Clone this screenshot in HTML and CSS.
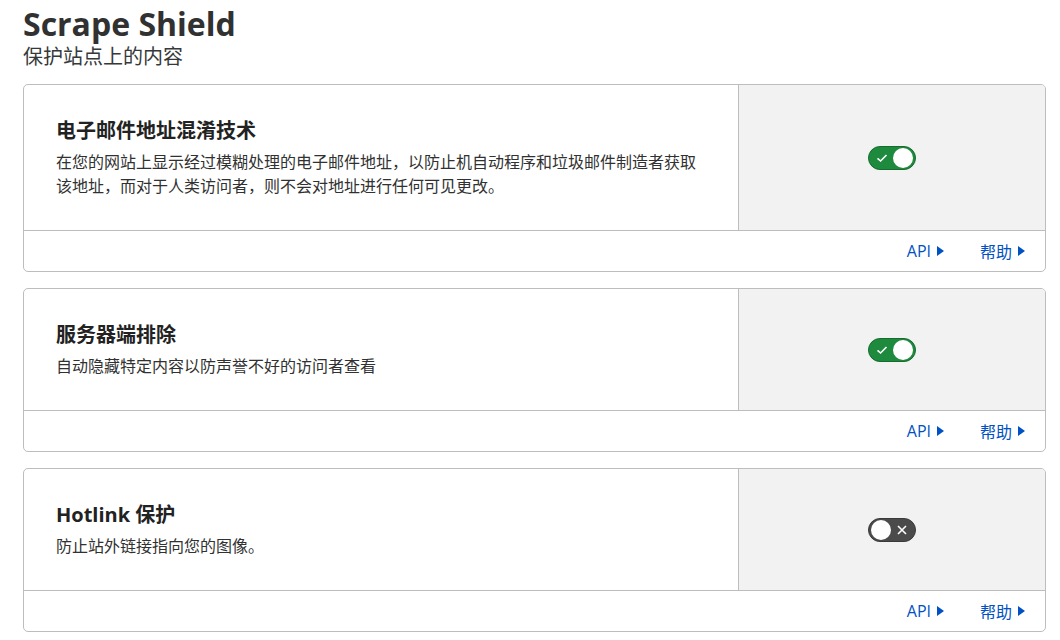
FILE: index.html
```html
<!DOCTYPE html>
<html lang="zh-CN">
<head>
    <meta charset="UTF-8">
    <title>Scrape Shield</title>
    <link rel="stylesheet" href="styles.css">
</head>
<body>
    <div class="page">
        <h1 class="page-title">Scrape Shield</h1>
        <p class="page-sub">保护站点上的内容</p>

        <!-- 电子邮件地址混淆 -->
        <div class="card">
            <div class="card-main">
                <div class="card-body">
                    <h2>电子邮件地址混淆技术</h2>
                    <p>在您的网站上显示经过模糊处理的电子邮件地址，以防止机自动程序和垃圾邮件制造者获取该地址，而对于人类访问者，则不会对地址进行任何可见更改。</p>
                </div>
                <div class="card-side">
                    <span class="toggle on">
                        <svg class="mark" viewBox="0 0 12 12" width="12" height="12"><path d="M1.5 6.3 L4.6 9 L10.5 3" fill="none" stroke="#fff" stroke-width="1.6"/></svg>
                        <span class="knob"></span>
                    </span>
                </div>
            </div>
            <div class="card-foot">
                <a href="#">API <span class="tri"></span></a>
                <a href="#">帮助 <span class="tri"></span></a>
            </div>
        </div>

        <!-- 服务器端排除 -->
        <div class="card">
            <div class="card-main">
                <div class="card-body">
                    <h2>服务器端排除</h2>
                    <p>自动隐藏特定内容以防声誉不好的访问者查看</p>
                </div>
                <div class="card-side">
                    <span class="toggle on">
                        <svg class="mark" viewBox="0 0 12 12" width="12" height="12"><path d="M1.5 6.3 L4.6 9 L10.5 3" fill="none" stroke="#fff" stroke-width="1.6"/></svg>
                        <span class="knob"></span>
                    </span>
                </div>
            </div>
            <div class="card-foot">
                <a href="#">API <span class="tri"></span></a>
                <a href="#">帮助 <span class="tri"></span></a>
            </div>
        </div>

        <!-- Hotlink 保护 -->
        <div class="card">
            <div class="card-main">
                <div class="card-body">
                    <h2>Hotlink 保护</h2>
                    <p>防止站外链接指向您的图像。</p>
                </div>
                <div class="card-side">
                    <span class="toggle off">
                        <span class="knob"></span>
                        <svg class="mark" viewBox="0 0 12 12" width="12" height="12"><path d="M2 2 L10 10 M10 2 L2 10" fill="none" stroke="#fff" stroke-width="1.6"/></svg>
                    </span>
                </div>
            </div>
            <div class="card-foot">
                <a href="#">API <span class="tri"></span></a>
                <a href="#">帮助 <span class="tri"></span></a>
            </div>
        </div>
    </div>
</body>
</html>
```

FILE: styles.css
```css
body {
    margin: 0;
    font-family: "Open Sans", "Noto Sans CJK SC", sans-serif;
    color: #313131;
    background-color: #fff;
}

.page {
    padding: 4px 14px 0 23px;
}

.page-title {
    margin: 0;
    font-size: 32px;
    font-weight: 700;
    line-height: 40px;
    color: #313131;
}

.page-sub {
    margin: 0 0 14px;
    font-size: 20px;
    line-height: 26px;
    color: #36393a;
}

.card {
    border: 1px solid #bdbdbd;
    border-radius: 5px;
    margin-bottom: 16px;
    overflow: hidden;
}

.card-main {
    display: flex;
    border-bottom: 1px solid #bdbdbd;
}

.card-body {
    flex: 1;
    padding: 32px 40px 32px 32px;
}

.card-body h2 {
    margin: 0 0 5px;
    font-size: 20px;
    font-weight: 700;
    line-height: 28px;
    color: #222;
}

.card-body p {
    margin: 0;
    font-size: 16px;
    line-height: 24px;
    color: #313131;
    max-width: 648px;
}

.card-side {
    width: 306px;
    background-color: #f2f2f2;
    border-left: 1px solid #bdbdbd;
    display: flex;
    align-items: center;
    justify-content: center;
}

.toggle {
    width: 48px;
    height: 24px;
    border-radius: 12px;
    box-sizing: border-box;
    display: flex;
    align-items: center;
    justify-content: space-between;
    padding: 0 2px 0 7px;
}

.toggle.on {
    background-color: #1e8a3e;
    border: 1px solid #166b2f;
}

.toggle.off {
    background-color: #4b4b4b;
    border: 1px solid #3a3a3a;
    padding: 0 7px 0 2px;
}

.knob {
    width: 20px;
    height: 20px;
    border-radius: 50%;
    background-color: #fff;
}

.mark {
    display: block;
}

.card-foot {
    height: 40px;
    display: flex;
    align-items: center;
    justify-content: flex-end;
    gap: 36px;
    padding-right: 20px;
}

.card-foot a {
    color: #0051c3;
    text-decoration: none;
    font-size: 16px;
    display: flex;
    align-items: center;
    gap: 6px;
}

.tri {
    width: 0;
    height: 0;
    border-top: 5px solid transparent;
    border-bottom: 5px solid transparent;
    border-left: 7px solid #0051c3;
}
```
